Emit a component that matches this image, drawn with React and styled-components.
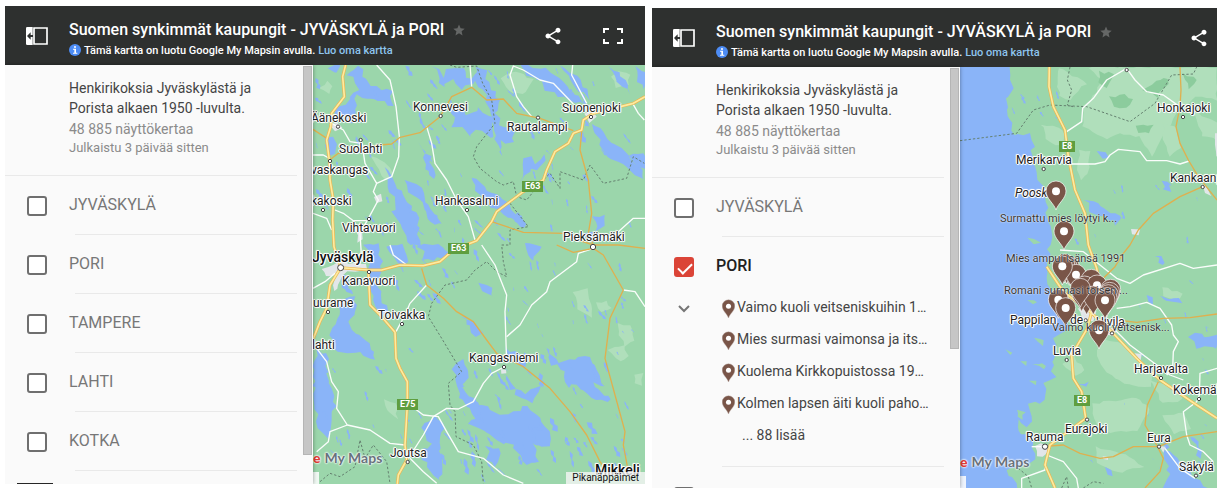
import { Fragment, useState } from "react";
import styled, { createGlobalStyle } from "styled-components";

const GlobalStyle = createGlobalStyle`
    * {
        box-sizing: border-box;
    }
    body {
        margin: 0;
        background: #fff;
        font-family: Roboto, "Liberation Sans", sans-serif;
    }
    button, input {
        font-family: inherit;
    }
`;

const Page = styled.main`
    display: flex;
    gap: 7px;
    height: 100vh;
    padding-left: 5px;
    overflow: hidden;
`;

const Frame = styled.section`
    display: flex;
    flex-direction: column;
    flex: ${props => props.$grow} 1 0;
    min-width: 0;
    margin: ${props => props.$margin};
    overflow: hidden;
`;

const Header = styled.header`
    display: flex;
    align-items: center;
    flex: none;
    height: 59px;
    padding: 0 ${props => props.$end} 0 20px;
    background: #2e302f;
    color: #fff;
`;

const IconButton = styled.button`
    display: flex;
    align-items: center;
    justify-content: center;
    flex: none;
    width: 24px;
    height: 24px;
    padding: 0;
    border: 0;
    background: none;
    color: ${props => props.$color || "#fff"};
    cursor: pointer;
`;

const Heading = styled.div`
    flex: 1;
    min-width: 0;
    margin-left: 20px;
    padding-top: 9px;
    white-space: nowrap;
`;

const TitleRow = styled.div`
    display: flex;
    align-items: center;
    gap: 8px;
    height: 20px;
`;

const Title = styled.h1`
    margin: 0;
    font-size: 16px;
    font-weight: 500;
    line-height: 20px;
`;

const StarButton = styled(IconButton)`
    width: 14px;
    height: 14px;
`;

const Notice = styled.p`
    display: flex;
    align-items: center;
    gap: 3px;
    height: 20px;
    margin: 0;
    font-size: 11px;
    font-weight: 500;
`;

const NoticeLink = styled.a`
    color: #8ec5ee;
    text-decoration: none;
`;

const Actions = styled.div`
    display: flex;
    gap: 36px;
`;

const Body = styled.div`
    display: flex;
    flex: 1;
    min-height: 0;
`;

const Sidebar = styled.aside`
    position: relative;
    z-index: 1;
    display: flex;
    flex: none;
    width: 308px;
    background: #fafafa;
    box-shadow: 0 0 4px rgba(0, 0, 0, 0.4);
    overflow: hidden;
`;

const SidebarContent = styled.div`
    width: 292px;
    margin-right: 6px;
`;

const ScrollTrack = styled.div`
    width: 9px;
    padding-top: 1px;
`;

const ScrollThumb = styled.div`
    height: ${props => props.$size};
    border: 1px solid #b5b5b5;
    background: #c6c6c6;
`;

const Intro = styled.div`
    height: 111px;
    padding: 13px 20px 0 64px;
    border-bottom: 1px solid #e9e9e9;
    color: #444;
    font-size: 14px;
    line-height: 20px;
`;

const Text = styled.p`
    margin: 0;
`;

const Meta = styled.p`
    margin: 0;
    color: #8b8b8b;
    font-size: ${props => props.$size};
    line-height: ${props => props.$line};
`;

const Layer = styled.div`
    &::after {
        content: "";
        display: block;
        height: 1px;
        margin-left: 70px;
        background: #e9e9e9;
    }
`;

const LayerRow = styled.label`
    display: flex;
    align-items: center;
    gap: 22px;
    height: 58px;
    padding: 2px 0 0 22px;
    color: ${props => props.$checked ? "#212121" : "#777"};
    font-size: 16px;
    font-weight: ${props => props.$checked ? 500 : 400};
    cursor: pointer;
`;

const LayerName = styled.span`
    line-height: 18px;
    padding-bottom: 2px;
`;

const Checkbox = styled.input`
    position: relative;
    appearance: none;
    flex: none;
    width: 20px;
    height: 20px;
    margin: 0;
    border: 2px solid #6f6f6f;
    border-radius: 3px;
    background: #fff;
    &:checked {
        border-color: #db4437;
        background: #db4437;
    }
    &:checked::after {
        content: "";
        position: absolute;
        left: 5px;
        top: 1px;
        width: 6px;
        height: 12px;
        border: solid #fff;
        border-width: 0 2px 2px 0;
        transform: rotate(45deg);
    }
`;

const Places = styled.div`
    display: flex;
    align-items: flex-start;
    padding: 0 0 15px 20px;
`;

const ExpandButton = styled(IconButton)`
    height: 28px;
`;

const PlaceList = styled.ul`
    flex: 1;
    margin: -4px 0 0 26px;
    padding: 0;
    list-style: none;
`;

const Place = styled.li`
    display: flex;
    align-items: center;
    gap: 2px;
    height: 32px;
    padding-left: ${props => props.$indent};
    color: #444;
    font-size: 14px;
    white-space: nowrap;
    svg {
        margin-top: 4px;
    }
`;

const Thumbnail = styled.div`
    width: 36px;
    height: 24px;
    margin: 12px 0 0 12px;
    background: #262626;
`;

const MapArea = styled.div`
    position: relative;
    flex: 1;
    min-width: 0;
    background: #9bd6ab;
    overflow: hidden;
`;

const MapDrawing = styled.svg`
    position: absolute;
    left: 0;
    top: 0;
`;

const MapLabel = styled.span`
    position: absolute;
    left: ${props => props.$x}px;
    top: ${props => props.$y}px;
    margin-top: -8px;
    color: ${props => props.$strong ? "#111" : "#222"};
    font-size: ${props => props.$strong ? "14px" : "12px"};
    font-style: ${props => props.$italic ? "italic" : "normal"};
    font-weight: ${props => props.$strong ? 500 : 400};
    line-height: 16px;
    white-space: nowrap;
    text-shadow: 1px 0 #fff, -1px 0 #fff, 0 1px #fff, 0 -1px #fff, 1px 1px 1px #fff, -1px -1px 1px #fff;
`;

const PinLabel = styled(MapLabel)`
    color: #333;
    font-size: 11px;
    text-shadow: 0 0 1px #fff, 0 0 2px rgba(255, 255, 255, 0.7);
`;

const RoadSign = styled.span`
    position: absolute;
    left: ${props => props.$x}px;
    top: ${props => props.$y}px;
    padding: 0 3px;
    background: #5f9e3f;
    color: #fff;
    font-size: 9px;
    font-weight: 700;
    line-height: 11px;
`;

const Logo = styled.div`
    position: absolute;
    left: 0;
    bottom: 16px;
    color: #68727c;
    font-family: Lato, Roboto, sans-serif;
    font-size: 14px;
    font-weight: 700;
    line-height: 20px;
    white-space: nowrap;
    text-shadow: 0 0 2px #fff, 0 0 2px #fff, 0 0 2px #fff;
`;

const LogoEnd = styled.span`
    margin-right: 4px;
    color: #df3e36;
    font-weight: 900;
`;

const MapTab = styled.div`
    position: absolute;
    left: 0;
    bottom: 0;
    width: 6px;
    height: 12px;
    background: rgba(255, 255, 255, 0.85);
`;

const Shortcuts = styled.button`
    position: absolute;
    right: 0;
    bottom: 0;
    height: 12px;
    padding: 0 6px;
    border: 0;
    background: rgba(245, 245, 245, 0.8);
    color: #111;
    font-size: 10px;
    line-height: 12px;
`;

const colors = {
    water: "#8ab4f8",
    land: "#9bd6ab",
    meadow: "#b0dfbb",
    forest: "#8ccc9d",
    town: "#e2e6e9"
};

function random(seed) {
    let value = seed;
    return () => {
        value = (value * 16807) % 2147483647;
        return value / 2147483647;
    };
}

// turns a coarse outline into a jagged shoreline
function shore(outline, amount = 7) {
    const points = outline.split(" ").map(pair => pair.split(",").map(Number));
    const next = random(points[0][0] * 31 + points[0][1] + 7);
    const result = [];
    points.forEach((point, index) => {
        const end = points[(index + 1) % points.length];
        const steps = Math.max(1, Math.round(Math.hypot(end[0] - point[0], end[1] - point[1]) / 16));
        for (let step = 0; step < steps; step++) {
            const t = step / steps;
            result.push([
                Math.round(point[0] + (end[0] - point[0]) * t + (next() - 0.5) * 2 * amount),
                Math.round(point[1] + (end[1] - point[1]) * t + (next() - 0.5) * 2 * amount)
            ]);
        }
    });
    return "M" + result.map(point => point.join(" ")).join("L") + "Z";
}

// small lakes, long from north-west to south-east
function ponds(seed, count, left, top, width, height, size) {
    const next = random(seed);
    let path = "";
    for (let index = 0; index < count; index++) {
        const x = left + next() * width, y = top + next() * height;
        const length = size * (0.4 + next()), wide = length * (0.15 + next() * 0.25);
        const angle = 0.7 + next() * 0.7;
        const corners = [[-1, 0], [-0.4, 0.8], [0.1, 0.4], [0.5, 1], [1, 0], [0.4, -0.7], [0, -0.3], [-0.5, -0.9]];
        path += "M" + corners.map(([a, b]) => {
            const along = a * length, across = b * wide * (0.5 + next());
            return Math.round(x + along * Math.cos(angle) - across * Math.sin(angle)) + " " +
                Math.round(y + along * Math.sin(angle) + across * Math.cos(angle));
        }).join("L") + "Z";
    }
    return path;
}

const eastMap = {
    viewBox: "9 195 996 1257",
    width: 332,
    height: 419,
    meadows: [
        "575,235 600,215 640,225 668,240 650,275 610,285 585,262",
        "905,230 930,212 960,225 955,258 920,262",
        "30,262 50,242 68,255 55,280",
        "185,470 225,490 250,520 230,540 205,510",
        "790,880 830,865 845,915 842,955 805,925",
        "860,905 890,905 905,925 875,938",
        "925,970 960,975 972,1020 945,1040 930,1010",
        "895,1050 940,1035 955,1070 930,1085",
        "975,1120 998,1118 992,1155 976,1150",
        "225,1200 260,1210 262,1255 238,1240"
    ],
    water: [
        "150,197 170,240 200,262 245,275 246,320 225,308 190,295 165,300 140,285 135,325 125,365 85,350 75,325 112,310 120,285 142,268 130,235 112,225",
        "60,200 95,196 85,225 70,215",
        "50,410 72,415 80,460 60,465",
        "370,197 405,240 415,205 455,200 465,235 500,225 500,197 520,200 545,265 565,300 560,345 580,385 620,395 605,430 575,420 570,465 552,410 545,350 525,280 500,245 455,262 430,235 400,262",
        "425,325 455,320 470,340 510,320 545,355 555,410 520,405 500,390 475,408 450,380 430,378 435,350",
        "635,197 690,200 740,225 780,275 835,310 790,312 745,285 710,270 690,240 655,225",
        "755,197 800,230 835,270 845,300 800,265",
        "900,197 935,225 960,280 925,250",
        "980,200 1005,220 1005,270 985,240",
        "850,370 875,390 900,430 945,455 985,500 1005,540 965,515 925,480 890,470 865,420",
        "960,470 1000,455 1005,510 985,500",
        "645,480 668,475 680,490 705,465 695,505 655,515 635,545",
        "230,505 265,560 290,600 320,640 330,735 300,735 275,690 250,640 262,610 235,560",
        "290,545 330,560 360,615 380,650 400,665 375,670 345,640 335,600 305,585",
        "330,430 360,470 375,540 350,520 345,470",
        "490,530 520,560 560,580 600,625 650,670 640,690 600,650 555,630 525,610 500,570",
        "850,650 885,645 880,680 860,690",
        "820,705 850,690 870,720 840,728",
        "165,735 205,735 215,800 200,850 215,905 240,935 225,945 190,915 177,840 180,790",
        "235,735 275,735 300,785 280,795 250,770",
        "325,735 380,735 420,755 400,780 330,775 340,755",
        "90,900 130,885 140,935 115,970 150,1010 195,1055 190,1080 135,1055 80,1060 60,1000 80,960",
        "25,1045 50,1065 55,1140 75,1200 70,1260 50,1310 25,1290 12,1200 12,1080",
        "75,800 110,830 130,890 100,870",
        "460,945 490,960 515,1000 495,1005 470,970",
        "590,1040 620,1060 650,1085 640,1100 605,1075",
        "700,1035 745,1085 790,1080 840,1070 860,1110 880,1160 850,1150 900,1205 845,1190 800,1155 775,1165 765,1120 725,1090",
        "430,1110 455,1080 475,1120 460,1160 500,1215 555,1235 610,1240 640,1215 690,1250 725,1310 715,1345 670,1330 690,1380 650,1400 605,1335 550,1320 520,1290 480,1270 500,1250 450,1190",
        "580,1110 600,1165 640,1180 690,1160 670,1205 620,1185",
        "340,1290 370,1245 405,1275 385,1330 400,1385 390,1452 350,1390 330,1360 360,1330",
        "530,1340 570,1350 560,1400 535,1375",
        "650,735 690,735 670,785 655,775",
        "510,850 545,865 555,900 530,885"
    ],
    ponds: [[11, 50, 20, 200, 450, 530, 14], [23, 42, 540, 205, 460, 480, 14], [37, 30, 260, 560, 360, 340, 15],
        [53, 34, 590, 760, 400, 360, 13], [67, 60, 400, 1110, 560, 330, 19], [79, 26, 20, 1050, 360, 380, 12]],
    towns: [
        "38,805 70,795 90,775 115,790 165,795 170,812 115,815 95,828 80,868 70,874 74,828 45,828",
        "60,372 82,366 95,385 72,392",
        "825,340 848,330 860,350 840,370",
        "195,590 212,582 216,605 200,612",
        "138,690 160,680 155,720 145,725",
        "575,1108 590,1108 588,1122 577,1120"
    ],
    borders: [
        "420,195 440,202 500,198 518,250 545,300 555,370 500,440 490,470 510,505 560,545 580,555 610,545 620,590 650,600 690,550 720,520 750,565 750,515 820,540 840,495 880,550 950,535 970,470 1003,490",
        "600,610 655,680 600,690 600,735 575,735 580,785 590,830 560,815 530,785 495,810 470,840 405,855 365,910 355,950 395,1015 455,1115 415,1150 420,1215 435,1235 438,1310 490,1335 515,1385 520,1450",
        "30,1445 60,1420 90,1430 135,1400 150,1320 165,1375 190,1335 230,1385 240,1450"
    ],
    minor: [
        "200,195 240,240 258,320 268,410 266,470 245,530 200,550 165,490 155,425",
        "200,550 190,575 205,600 178,650 150,700 155,780",
        "65,370 100,390 120,425 155,430", "9,465 40,465 58,475",
        "480,195 485,260", "350,380 365,430 375,490 410,540 440,600 475,650 495,720",
        "665,350 640,320 620,290 600,225 610,198 640,210 690,240 730,250 790,312",
        "788,195 785,225 830,310", "968,310 985,340 1003,360",
        "1005,655 970,655 920,700 880,720", "75,630 100,640 130,662 170,662", "9,640 50,655 65,690",
        "515,735 555,795 570,835 590,885 585,935 590,1090",
        "850,745 805,760 800,785 760,815 720,845 710,875 665,915 630,975 590,1010",
        "940,870 975,875 1005,920", "350,855 300,910 285,945 258,995",
        "582,1101 545,1120 520,1150 490,1205 445,1227 410,1225 370,1250 340,1305 295,1375",
        "20,1045 50,1085 65,1145 85,1175 80,1225 112,1275 60,1295 55,1325 20,1355",
        "112,1275 180,1290 240,1330 285,1335",
        "300,1215 340,1245 385,1250 410,1295 445,1355 520,1375 580,1425 640,1450",
        "300,1375 340,1415 380,1450", "240,735 250,765 290,795", "9,865 45,845 75,820"
    ],
    regional: [
        "9,388 55,418", "62,478 85,460 140,450 210,435 245,432 270,412 330,398 390,350 425,290 485,262 530,300 580,297 620,340 690,355 790,392",
        "815,395 810,450 835,540 845,640 835,700 850,735",
        "545,665 590,680 640,697 760,700 805,720 850,735 925,735 1005,745",
        "335,805 350,855 400,895 440,935 490,965 530,1020 560,1060 600,1080 640,1100 720,1165 780,1235 830,1305 870,1385 895,1420",
        "740,735 790,757 850,745 880,765 940,870 900,955 885,1075 915,1185 945,1295 940,1335 955,1415"
    ],
    highways: [
        "107,195 98,230 103,290 65,340 62,380 50,420 58,480 60,540 70,600 68,660 72,740 92,803 60,855 50,925 30,965 10,1015",
        "92,803 175,810 215,810 270,795 340,797 390,785 430,750 500,722 545,665 560,635 600,605 640,575 700,540 710,510 735,455 775,430 790,400 815,390 820,360 850,340 970,310 1005,290",
        "175,815 180,915 215,950 255,997 258,1075 270,1105 292,1145 292,1215 285,1335 290,1380 265,1425 262,1452"
    ],
    places: [[392, 348], [84, 380], [152, 420], [684, 353], [843, 351], [60, 483], [39, 630], [471, 630], [177, 657],
        [849, 741, 8], [92, 803, 9], [177, 816], [54, 936], [276, 972], [582, 1101], [293, 1386]],
    pins: [],
    labels: [
        ["Äänekoski", -2, 53], ["Konnevesi", 100, 42], ["Suonenjoki", 249, 43], ["Rautalampi", 194, 62],
        ["Suolahti", 26, 84], ["vaskangas", -2, 105], ["kakoski", -2, 136], ["Hankasalmi", 122, 136],
        ["Vihtavuori", 29, 163], ["Pieksämäki", 250, 172], ["Jyväskylä", -1, 192, "strong"], ["Kanavuori", 29, 216],
        ["uurame", 0, 238], ["Toivakka", 65, 250], ["lahti", -1, 280], ["Kangasniemi", 156, 293],
        ["Joutsa", 77, 388], ["Mikkeli", 282, 405, "strong"]
    ],
    pinLabels: [],
    signs: [["E63", 209, 116], ["E63", 135, 178], ["E75", 84, 334]]
};

const westMap = {
    viewBox: "30 201 771 1263",
    width: 257,
    height: 421,
    meadows: [
        "330,201 410,250 360,300 330,290 320,250",
        "420,201 801,201 801,300 740,290 690,330 640,400 610,470 570,410 510,400 470,420 400,380 400,320 430,290 460,240",
        "275,370 340,390 345,430 320,440 290,415",
        "390,450 420,455 415,520 390,540 380,490",
        "640,370 680,380 690,440 660,470 640,420",
        "730,330 801,370 801,420 760,410",
        "450,1020 520,1030 570,1080 610,1120 600,1160 520,1150 470,1120 440,1070",
        "640,860 700,880 690,900 640,890",
        "430,1210 560,1190 600,1230 560,1290 480,1300 430,1260",
        "340,1090 370,1070 400,1110 380,1130",
        "640,1250 700,1240 720,1290 670,1300",
        "440,1340 540,1370 580,1400 500,1420 440,1390",
        "600,1140 680,1160 700,1200 640,1210"
    ],
    forests: [
        "480,290 520,285 550,300 530,325 495,320", "580,270 640,230 660,250 620,290",
        "560,375 610,375 600,400 565,395", "450,215 490,220 470,260 445,250", "700,220 740,240 720,270"
    ],
    water: [
        "20,190 182,190 186,260 170,300 168,345 190,370 190,405 240,405 250,440 245,470 262,520 290,590 288,640 302,680 300,735 290,795 290,835 305,865 300,905 345,960 355,980 330,1000 312,1015 322,1065 302,1085 312,1135 280,1155 290,1205 240,1215 252,1265 225,1275 200,1262 215,1305 250,1305 250,1375 230,1395 170,1415 190,1435 200,1475 20,1475",
        "408,600 430,605 450,620 485,635 520,660 500,670 460,650 425,640",
        "445,455 465,450 475,470 455,475",
        "640,540 665,550 660,575 640,570",
        "718,1015 735,1000 800,1010 800,1050 770,1045 735,1040",
        "645,1350 670,1370 705,1395 730,1435 765,1452 780,1475 635,1475 655,1425",
        "725,1310 745,1325 755,1370 740,1365",
        "620,765 640,770 650,790 625,790",
        "595,880 610,890 610,910 595,900",
        "635,890 690,895 700,905 650,905",
        "385,1148 410,1150 405,1162 388,1160",
        "470,1405 490,1415 485,1430 468,1422",
        "645,1325 655,1340 645,1350"
    ],
    islands: ["235,715 255,718 270,730 250,732", "215,1085 232,1082 228,1098", "240,1145 262,1140 258,1158",
        "205,1225 225,1235 215,1260 200,1250", "170,1050 185,1055 178,1066", "255,1015 285,1020 275,1040",
        "250,1090 290,1095 280,1110", "235,900 262,905 250,915"],
    ponds: [[91, 10, 380, 560, 380, 170, 10], [97, 12, 560, 830, 230, 350, 8], [101, 12, 420, 1200, 360, 240, 8], [5, 8, 190, 260, 160, 110, 10]],
    towns: [
        "258,1340 275,1332 300,1345 290,1362 262,1372", "755,550 775,565 785,590 765,580",
        "545,690 570,685 565,705 548,705", "630,1340 645,1342 640,1360", "385,925 440,930 430,965 395,955",
        "470,975 500,985 490,1010 470,1000", "460,1368 472,1368 472,1380 460,1380", "555,1060 575,1062 570,1085", "797,400 803,400 803,470 797,470"
    ],
    borders: [
        "30,422 200,400 250,330 300,315 410,320 540,365 615,310 665,225 730,222 740,201",
        "360,201 352,240 365,270 352,315 375,322", "205,1405 235,1430 245,1464", "335,1464 350,1430 355,1464",
        "400,1464 430,1445 460,1450"
    ],
    minor: [
        "350,395 395,365 398,325 430,295 470,240 530,205 555,240 590,275 640,285 692,322",
        "365,492 435,492 465,485 480,465 505,448 570,455 590,482 650,482 690,492 718,483",
        "330,750 400,755 450,795 500,835 540,850 580,825 690,790 730,805 801,795",
        "500,925 540,920 590,907 630,925 665,975 670,1005 685,1025 670,1055 668,1105 650,1125",
        "490,985 540,1035 600,1080 660,1125 700,1140", "801,1105 750,1120 748,1185 740,1205 700,1235 710,1305 720,1335 760,1355 790,1385",
        "290,1365 340,1385 380,1435 385,1464", "245,1340 285,1340", "645,1345 690,1405 735,1435", "290,1370 285,1410 215,1435 215,1464",
        "530,201 545,190"
    ],
    regional: [
        "690,201 693,270 690,320 678,380 690,430 715,480 745,530 801,600",
        "758,560 690,590 610,640 565,690 540,735 520,760 495,800 460,835",
        "500,960 560,967 640,955 720,953 801,942",
        "625,1145 592,1215 585,1275 620,1335 640,1375 630,1415 585,1464",
        "300,1338 340,1335 390,1360 450,1375 490,1370 550,1340 625,1340 700,1310 801,1295"
    ],
    highways: [
        "298,201 297,260 310,320 345,390 355,470 375,570 405,640 415,735 440,805 455,880 425,935 412,985 365,1065 370,1135 395,1175 407,1255 300,1335 285,1395 315,1464",
        "290,800 340,875 420,935 485,995 560,1075 630,1140 740,1215 801,1255"
    ],
    places: [[530, 210], [699, 351], [281, 507], [758, 561], [407, 961], [486, 1000], [350, 1080], [633, 1134], [747, 1197],
        [411, 1259], [285, 1340, 8], [627, 1340], [738, 1427]],
    pins: [
        [318, 630, 1], [342, 750, 1], [358, 856, 0], [350, 852, 0], [344, 849, 0], [378, 880, 1], [337, 855, 1],
        [415, 930, 0], [424, 895, 0], [404, 915, 0], [410, 945, 0], [395, 935, 0], [441, 912, 1], [430, 945, 0],
        [482, 925, 0], [479, 934, 0], [475, 941, 0], [471, 950, 0],
        [391, 922, 0], [465, 957, 1], [325, 955, 1], [347, 980, 1], [447, 1047, 1]
    ],
    labels: [
        ["Merikarvia", 56, 93], ["Honkajoki", 197, 41], ["Kankaanpää", 210, 111], ["Poosk", 55, 126, "italic"],
        ["Pappilan", 50, 253], ["de", 110, 253], ["Ulvila", 136, 255], ["Luvia", 93, 284], ["Harjavalta", 174, 302],
        ["Kokemäki", 213, 323], ["Eurajoki", 105, 362], ["Rauma", 66, 370], ["Eura", 187, 371], ["Säkylä", 219, 400]
    ],
    pinLabels: [["Surmattu mies löytyi k...", 40, 152], ["Mies ampui isänsä 1991", 46, 192],
        ["Romani surmasi toisen ...", 44, 224], ["Vaimo kuoli veitsenisk...", 92, 261]],
    signs: [["E8", 99, 74], ["E8", 114, 328]]
};

const layers = ["JYVÄSKYLÄ", "PORI", "TAMPERE", "LAHTI", "KOTKA"];
const places = [
    "Vaimo kuoli veitseniskuihin 1…",
    "Mies surmasi vaimonsa ja its…",
    "Kuolema Kirkkopuistossa 19…",
    "Kolmen lapsen äiti kuoli paho…"
];

const PIN = "M0 0C-6 -20 -30 -34 -30 -57A30 30 0 0 1 30 -57C30 -34 6 -20 0 0Z";

const Roads = ({ lines, ...stroke }) => lines.map(line =>
    <polyline key={line} points={line} fill="none" strokeLinejoin="round" {...stroke} />);

const Shapes = ({ outlines = [], fill, amount }) => outlines.map(outline =>
    <path key={outline} d={shore(outline, amount)} fill={fill} />);

const PlaceMap = ({ map, children }) => <MapArea>
    <MapDrawing width={map.width} height={map.height} viewBox={map.viewBox} aria-hidden="true">
        <Shapes outlines={map.meadows} fill={colors.meadow} amount={4} />
        <Shapes outlines={map.forests} fill={colors.forest} amount={4} />
        <Shapes outlines={map.water} fill={colors.water} />
        <Shapes outlines={map.islands} fill={colors.land} amount={4} />
        {map.ponds.map(args => <path key={args[0]} d={ponds(...args)} fill={colors.water} />)}
        <Shapes outlines={map.towns} fill={colors.town} amount={3} />
        <Roads lines={map.borders} stroke="#64806f" strokeWidth="3" strokeDasharray="7 6" />
        <Roads lines={map.minor} stroke="#fafdfb" strokeWidth="4" />
        <Roads lines={map.regional} stroke="#dfb04f" strokeWidth="4" />
        <Roads lines={map.highways} stroke="#ecb650" strokeWidth="9" />
        <Roads lines={map.highways} stroke="#fdeb9f" strokeWidth="5" />
        {map.places.map(([x, y, r = 5]) =>
            <circle key={x + "-" + y} cx={x} cy={y} r={r} fill="#fff" stroke="#444" strokeWidth="3" />)}
    </MapDrawing>
    {map.labels.map(([name, x, y, kind]) =>
        <MapLabel key={name} $x={x} $y={y} $strong={kind === "strong"} $italic={kind === "italic"}>{name}</MapLabel>)}
    {map.signs.map(([name, x, y]) => <RoadSign key={y} $x={x} $y={y}>{name}</RoadSign>)}
    <MapDrawing width={map.width} height={map.height} viewBox={map.viewBox} aria-hidden="true">
        {map.pins.map(([x, y, dot]) => <g key={x + "-" + y} transform={`translate(${x} ${y})`}>
            <path d={PIN} fill="#795548" stroke="#fff" strokeWidth="2" />
            {dot === 1 && <circle cy="-56" r="12" fill="#fff" />}
        </g>)}
    </MapDrawing>
    {map.pinLabels.map(([name, x, y]) => <PinLabel key={name} $x={x} $y={y}>{name}</PinLabel>)}
    <Logo><LogoEnd>e</LogoEnd>My Maps</Logo>
    <MapTab />
    {children}
</MapArea>;

const PanelIcon = () => <svg width="22" height="18" viewBox="0 0 66 54">
    <path d="M4 0H20V54H4Q0 54 0 50V4Q0 0 4 0Z" fill="#fff" />
    <path d="M24 3H63V51H24Z" fill="none" stroke="#fff" strokeWidth="5" />
    <path d="M3 27L14 16V24H21V30H14V38Z" fill="#2e302f" />
</svg>;

const InfoIcon = () => <svg width="12" height="12" viewBox="0 0 36 36">
    <circle cx="18" cy="18" r="18" fill="#4d8cf5" />
    <circle cx="18" cy="9" r="3" fill="#fff" />
    <path d="M12 14H21V26H25V29H12V26H16V17H12Z" fill="#fff" />
</svg>;

const StarIcon = () => <svg width="12" height="12" viewBox="0 0 24 24">
    <path d="M12 1L15.2 8.6L23.5 9.3L17.2 14.7L19.1 22.8L12 18.5L4.9 22.8L6.8 14.7L0.5 9.3L8.8 8.6Z" fill="#656766" />
</svg>;

const ShareIcon = () => <svg width="20" height="20" viewBox="0 0 24 24" fill="currentColor">
    <path d="M18 16.08c-.76 0-1.44.3-1.96.77L8.91 12.7c.05-.23.09-.46.09-.7s-.04-.47-.09-.7l7.05-4.11c.54.5 1.25.81 2.04.81 1.66 0 3-1.34 3-3s-1.34-3-3-3-3 1.34-3 3c0 .24.04.47.09.7L8.04 9.81C7.5 9.31 6.79 9 6 9c-1.66 0-3 1.34-3 3s1.34 3 3 3c.79 0 1.5-.31 2.04-.81l7.12 4.16c-.05.21-.08.43-.08.65 0 1.61 1.31 2.92 2.92 2.92s2.92-1.31 2.92-2.92-1.31-2.92-2.92-2.92z" />
</svg>;

const FullscreenIcon = () => <svg width="20" height="16" viewBox="0 0 20 16" fill="none" stroke="currentColor" strokeWidth="2">
    <path d="M6 1H1V5M14 1H19V5M6 15H1V11M14 15H19V11" />
</svg>;

const PinIcon = () => <svg width="13" height="20" viewBox="-31 -88 62 90">
    <path d={PIN} fill="#795548" stroke="#b8a79f" strokeWidth="2" />
    <circle cy="-56" r="12" fill="#fff" />
</svg>;

const ChevronIcon = () => <svg width="12" height="8" viewBox="0 0 12 8">
    <path d="M1 1L6 6L11 1" fill="none" stroke="currentColor" strokeWidth="2" />
</svg>;

const TopBar = ({ end, fullscreen }) => <Header $end={end}>
    <IconButton type="button" aria-label="Sivupaneeli"><PanelIcon /></IconButton>
    <Heading>
        <TitleRow>
            <Title>Suomen synkimmät kaupungit - JYVÄSKYLÄ ja PORI</Title>
            <StarButton type="button" aria-label="Tähti"><StarIcon /></StarButton>
        </TitleRow>
        <Notice>
            <InfoIcon />
            <span>Tämä kartta on luotu Google My Mapsin avulla.</span>
            <NoticeLink href="#luo">Luo oma kartta</NoticeLink>
        </Notice>
    </Heading>
    <Actions>
        <IconButton type="button" aria-label="Jaa"><ShareIcon /></IconButton>
        {fullscreen && <IconButton type="button" aria-label="Koko näyttö"><FullscreenIcon /></IconButton>}
    </Actions>
</Header>;

const LayerPanel = ({ id, names, open, thumb, thumbnail }) => {
    const [checked, setChecked] = useState(open ? [open] : []);
    const toggle = name => setChecked(checked.includes(name) ? checked.filter(item => item !== name) : [...checked, name]);

    return <Sidebar>
        <SidebarContent>
            <Intro>
                <Text>Henkirikoksia Jyväskylästä ja Porista alkaen 1950 -luvulta.</Text>
                <Meta $size="14px" $line="22px">48 885 näyttökertaa</Meta>
                <Meta $size="13px" $line="16px">Julkaistu 3 päivää sitten</Meta>
            </Intro>
            {names.map(name => <Layer key={name}>
                <LayerRow htmlFor={id + name} $checked={checked.includes(name)}>
                    <Checkbox id={id + name} type="checkbox" checked={checked.includes(name)} onChange={() => toggle(name)} />
                    <LayerName>{name}</LayerName>
                </LayerRow>
                {name === open && checked.includes(name) && <Places>
                    <ExpandButton type="button" $color="#757575" aria-label="Tiivistä"><ChevronIcon /></ExpandButton>
                    <PlaceList>
                        {places.map(place => <Place key={place}><PinIcon />{place}</Place>)}
                        <Place $indent="20px">... 88 lisää</Place>
                    </PlaceList>
                </Places>}
            </Layer>)}
            {thumbnail && <Thumbnail />}
        </SidebarContent>
        <ScrollTrack><ScrollThumb $size={thumb} /></ScrollTrack>
    </Sidebar>;
};

const App = () => <Fragment>
    <GlobalStyle />
    <Page>
        <Frame $grow={640} $margin="6px 0">
            <TopBar end="20px" fullscreen />
            <Body>
                <LayerPanel id="east" names={layers} thumb="93%" thumbnail />
                <PlaceMap map={eastMap}>
                    <Shortcuts type="button">Pikanäppäimet</Shortcuts>
                </PlaceMap>
            </Body>
        </Frame>
        <Frame $grow={565} $margin="8px 0 2px">
            <TopBar end="6px" />
            <Body>
                <LayerPanel id="west" names={layers.slice(0, 3)} open="PORI" thumb="67%" />
                <PlaceMap map={westMap} />
            </Body>
        </Frame>
    </Page>
</Fragment>;

export default App;
